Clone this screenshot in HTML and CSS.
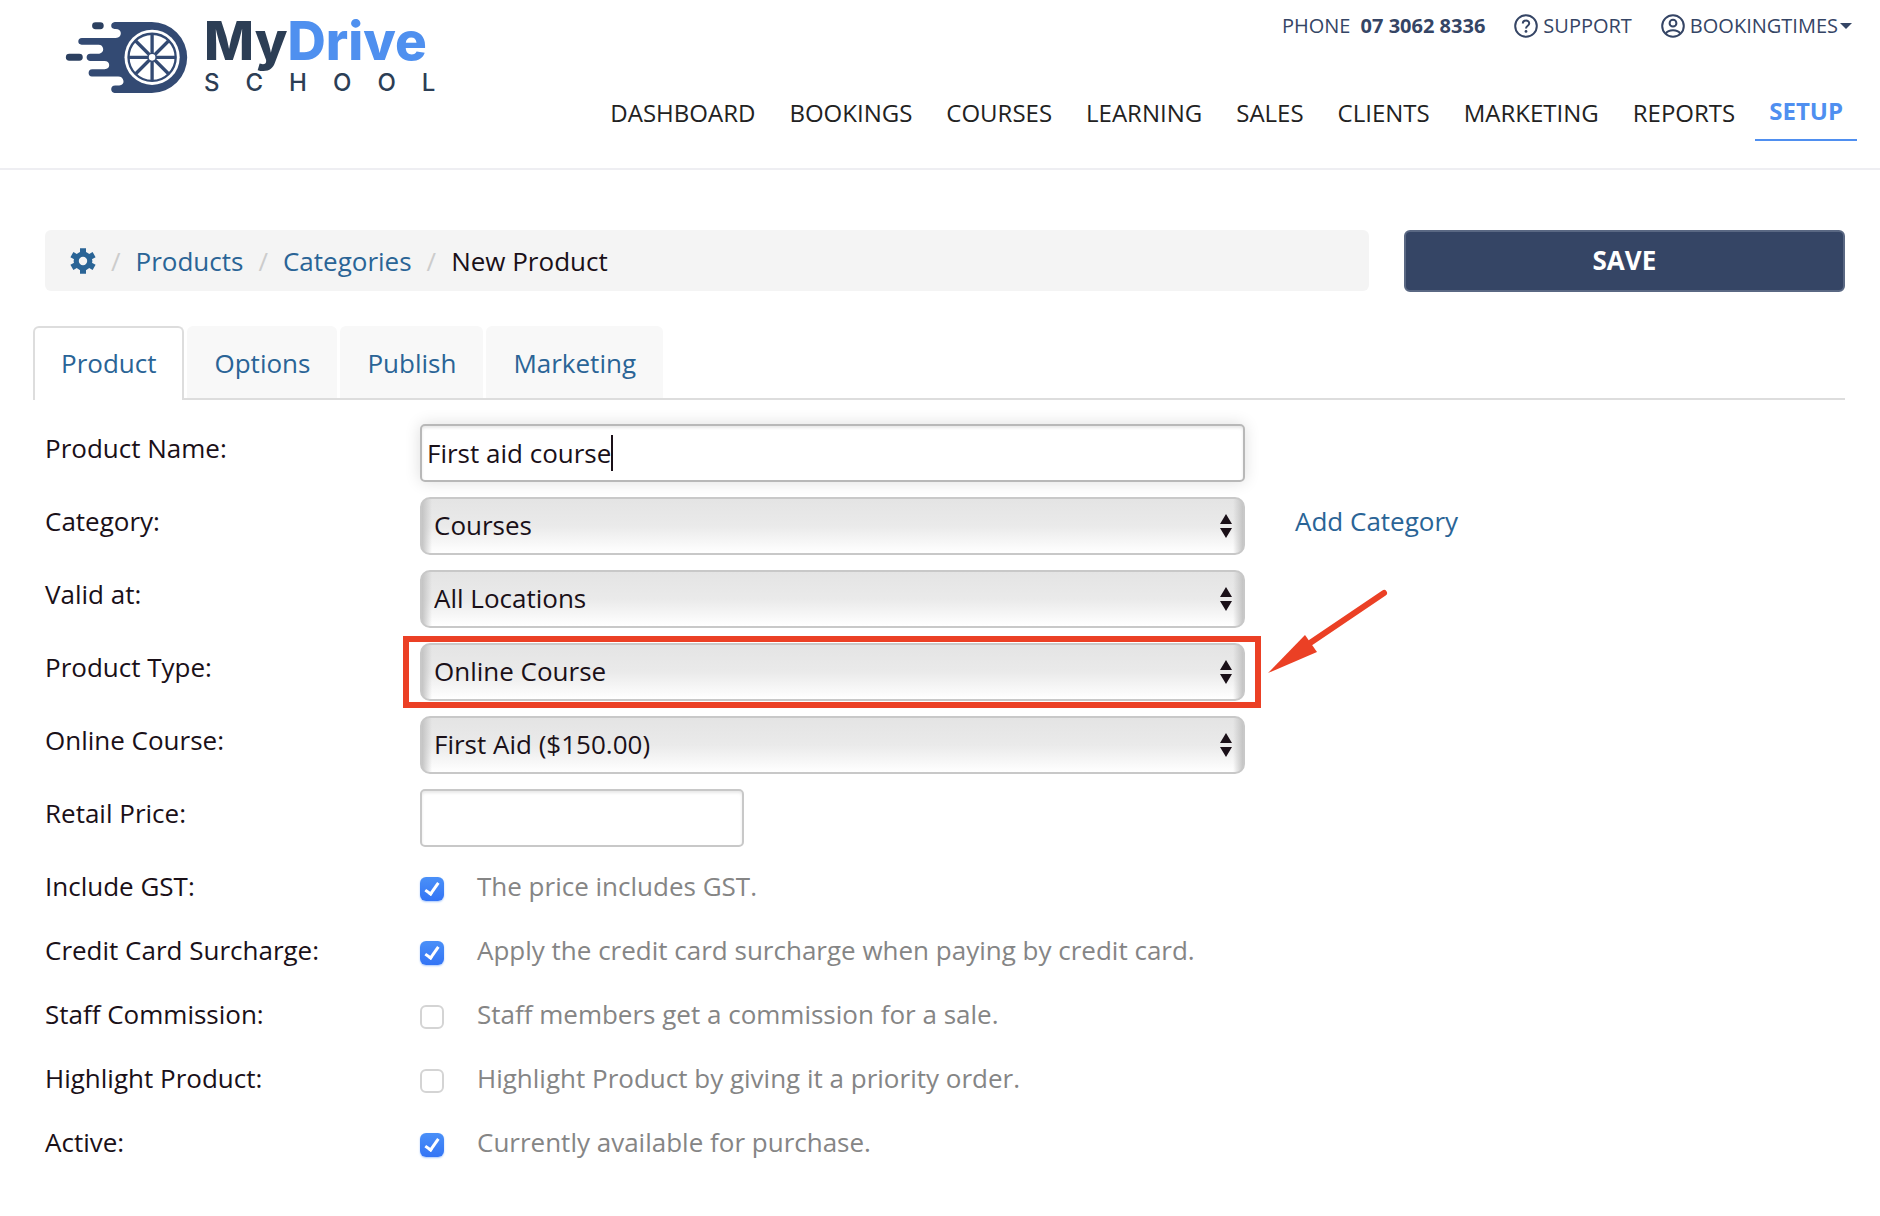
FILE: index.html
```html
<!DOCTYPE html>
<html lang="en">
<head>
<meta charset="utf-8">
<meta name="viewport" content="width=device-width, initial-scale=1">
<title>New Product - MyDrive School</title>
<link rel="stylesheet" href="styles.css">
</head>
<body>
<header class="site-header">
  <a class="logo" href="#" aria-label="MyDrive School">
    <svg class="logo-mark" viewBox="45 58 370 222" aria-hidden="true">
      <path fill="#334a73" d="M195 64H306A106 106 0 0 1 306 277H194Q184 275 184 266Q184 256 196 255H208Q222 252 221 241Q218 228 205 228H126Q116 226 116 217Q116 207 127 206H164Q178 204 178 193Q177 181 164 181H120Q110 179 110 170Q110 160 121 159H148Q160 156 160 145Q158 132 146 132H95Q85 130 85 122Q85 113 96 112H198Q213 110 213 97Q211 85 198 85H194Q184 83 184 75Q184 66 195 64Z"/>
      <path stroke="#2c4060" stroke-width="21" stroke-linecap="round" d="M137 75H151M58 170H88"/>
      <circle cx="307" cy="170" r="83" fill="#fff"/>
      <circle cx="307" cy="170" r="71" fill="none" stroke="#334a73" stroke-width="7"/>
      <path stroke="#334a73" stroke-width="10" d="M307 100V240M237 170H377M257 120L357 220M357 120L257 220"/>
      <circle cx="307" cy="170" r="12" fill="#fff" stroke="#334a73" stroke-width="4"/>
    </svg>
    <span class="logo-text">
      <span class="logo-name">My<span class="logo-accent">Drive</span></span>
      <span class="logo-sub">SCHOOL</span>
    </span>
  </a>
  <div class="header-right">
    <div class="utility">
      <span class="phone">PHONE <strong>07 3062 8336</strong></span>
      <a class="util-link" href="#">
        <svg class="util-icon" viewBox="0 0 24 24" aria-hidden="true"><g fill="none" stroke="currentColor" stroke-width="2"><circle cx="12" cy="12" r="10.8"/><path d="M8.8 9.6C8.8 5.6 15.2 5.6 15.2 9.4C15.2 11.8 12 11.6 12 14.4"/></g><circle cx="12" cy="17.4" r="1.4" fill="currentColor"/></svg>
        SUPPORT
      </a>
      <a class="util-link" href="#">
        <svg class="util-icon" viewBox="0 0 24 24" aria-hidden="true"><g fill="none" stroke="currentColor" stroke-width="2"><circle cx="12" cy="12" r="10.8"/><circle cx="12" cy="9.2" r="3.4"/><path d="M4.8 19.6C7.6 15.2 16.4 15.2 19.2 19.6"/></g></svg>
        BOOKINGTIMES<span class="caret"></span>
      </a>
    </div>
    <nav class="main-nav">
      <a href="#">DASHBOARD</a>
      <a href="#">BOOKINGS</a>
      <a href="#">COURSES</a>
      <a href="#">LEARNING</a>
      <a href="#">SALES</a>
      <a href="#">CLIENTS</a>
      <a href="#">MARKETING</a>
      <a href="#">REPORTS</a>
      <a class="current" href="#">SETUP</a>
    </nav>
  </div>
</header>

<main class="content">
  <div class="title-row">
    <nav class="breadcrumb" aria-label="Breadcrumb">
      <a class="crumb-home" href="#" aria-label="Setup">
        <svg class="gear" viewBox="0 0 26 26" aria-hidden="true">
          <g fill="none" stroke="currentColor">
            <circle cx="13" cy="13" r="6.8" stroke-width="5.2"/>
            <path stroke-width="6" stroke-linejoin="round" d="M13 0.2V6M13 20V25.8M1.9 6.6L7 9.5M19 16.5L24.1 19.4M24.1 6.6L19 9.5M7 16.5L1.9 19.4"/>
          </g>
        </svg>
      </a>
      <span class="slash">/</span>
      <a href="#">Products</a>
      <span class="slash">/</span>
      <a href="#">Categories</a>
      <span class="slash">/</span>
      <span>New Product</span>
    </nav>
    <button class="save" type="submit" form="product-form">SAVE</button>
  </div>

  <nav class="tabs">
    <a class="tab active" href="#">Product</a>
    <a class="tab" href="#">Options</a>
    <a class="tab" href="#">Publish</a>
    <a class="tab" href="#">Marketing</a>
  </nav>

  <form class="form" id="product-form">
    <div class="row">
      <label for="name">Product Name:</label>
      <div class="typed">
        <input class="text-input focused" id="name" type="text" value="First aid course">
        <span class="cursor"></span>
      </div>
    </div>
    <div class="row">
      <label for="category">Category:</label>
      <div class="select">
        <select id="category"><option>Courses</option></select>
        <svg class="arrows" viewBox="0 0 12 24" aria-hidden="true"><path d="M6 0L12 10H0ZM0 14H12L6 24Z"/></svg>
      </div>
      <a class="side-link" href="#">Add Category</a>
    </div>
    <div class="row">
      <label for="valid">Valid at:</label>
      <div class="select">
        <select id="valid"><option>All Locations</option></select>
        <svg class="arrows" viewBox="0 0 12 24" aria-hidden="true"><path d="M6 0L12 10H0ZM0 14H12L6 24Z"/></svg>
      </div>
    </div>
    <div class="row">
      <label for="type">Product Type:</label>
      <div class="select">
        <select id="type"><option>Online Course</option></select>
        <svg class="arrows" viewBox="0 0 12 24" aria-hidden="true"><path d="M6 0L12 10H0ZM0 14H12L6 24Z"/></svg>
        <span class="highlight"></span>
        <svg class="pointer" viewBox="0 0 120 84" aria-hidden="true"><path stroke="#eb4025" stroke-width="6" stroke-linecap="round" d="M116 4L42 54"/><path fill="#eb4025" d="M0 84L37 46L49 63Z"/></svg>
      </div>
    </div>
    <div class="row">
      <label for="course">Online Course:</label>
      <div class="select">
        <select id="course"><option>First Aid ($150.00)</option></select>
        <svg class="arrows" viewBox="0 0 12 24" aria-hidden="true"><path d="M6 0L12 10H0ZM0 14H12L6 24Z"/></svg>
      </div>
    </div>
    <div class="row">
      <label for="price">Retail Price:</label>
      <div><input class="text-input short" id="price" type="text"></div>
    </div>
    <div class="checks">
      <div class="check-row">
        <label for="gst">Include GST:</label>
        <div class="check"><input id="gst" type="checkbox" checked aria-describedby="gst-hint"><span id="gst-hint">The price includes GST.</span></div>
      </div>
      <div class="check-row">
        <label for="surcharge">Credit Card Surcharge:</label>
        <div class="check"><input id="surcharge" type="checkbox" checked aria-describedby="surcharge-hint"><span id="surcharge-hint">Apply the credit card surcharge when paying by credit card.</span></div>
      </div>
      <div class="check-row">
        <label for="commission">Staff Commission:</label>
        <div class="check"><input id="commission" type="checkbox" aria-describedby="commission-hint"><span id="commission-hint">Staff members get a commission for a sale.</span></div>
      </div>
      <div class="check-row">
        <label for="priority">Highlight Product:</label>
        <div class="check"><input id="priority" type="checkbox" aria-describedby="priority-hint"><span id="priority-hint">Highlight Product by giving it a priority order.</span></div>
      </div>
      <div class="check-row">
        <label for="active">Active:</label>
        <div class="check"><input id="active" type="checkbox" checked aria-describedby="active-hint"><span id="active-hint">Currently available for purchase.</span></div>
      </div>
    </div>
  </form>
</main>
</body>
</html>
```
FILE: styles.css
```css
* { box-sizing: border-box; }

body {
  margin: 0;
  background: #fff;
  color: #1a1018;
  font: 26px/36px "Open Sans", sans-serif;
}

a { color: #2a6496; text-decoration: none; }

/* Header */
.site-header {
  display: flex;
  justify-content: space-between;
  height: 170px;
  padding: 0 23px 0 65px;
  border-bottom: 2px solid #eeeef2;
}

.logo { display: flex; gap: 16px; padding-top: 20px; }
.logo-mark { width: 123px; height: 74px; }
.logo-text { display: flex; flex-direction: column; font-family: Inter, sans-serif; color: #2c3e55; }
.logo-name { font-size: 53px; font-weight: 800; line-height: 42px; }
.logo-accent { color: #4f90ef; }
.logo-sub { font-size: 24px; font-weight: 500; line-height: 42px; letter-spacing: 26px; }

.header-right { display: flex; flex-direction: column; align-items: flex-end; }

.utility {
  display: flex;
  align-items: center;
  gap: 29px;
  height: 52px;
  padding-right: 5px;
  font-size: 20px;
  color: #354565;
}
.phone strong { margin-left: 5px; }
.util-link { display: flex; align-items: center; gap: 5px; color: #354565; }
.util-icon { width: 24px; height: 24px; }
.caret { border: 6px solid transparent; border-top-color: currentColor; border-bottom: 0; margin-left: -3px; }

.main-nav { display: flex; padding-top: 36px; font-size: 24px; }
.main-nav a { padding: 7px 17px 0; color: #222; }
.main-nav .current {
  height: 53px;
  margin-left: 3px;
  padding: 5px 14px 0;
  border-bottom: 2px solid #4f8ff0;
  color: #4f8ff0;
  font-weight: 700;
}

/* Title bar */
.content { padding: 60px 35px 40px 45px; }
.title-row { display: grid; grid-template-columns: 3fr 1fr; align-items: start; gap: 35px; }
.breadcrumb {
  display: flex;
  align-items: center;
  gap: 15px;
  height: 61px;
  padding: 0 25px;
  border-radius: 6px;
  background: #f4f4f4;
}
.crumb-home { display: flex; }
.gear { width: 26px; height: 26px; }
.slash { color: #ccc; }
.save {
  height: 62px;
  padding-bottom: 3px;
  border: 2px solid #5a6883;
  border-radius: 6px;
  background: #354565;
  color: #fff;
  font: 700 26px/36px "Open Sans", sans-serif;
}

/* Tabs */
.tabs {
  display: flex;
  gap: 3px;
  margin: 34px 0 0 -12px;
  border-bottom: 2px solid #ddd;
}
.tab {
  height: 72px;
  padding: 19px 27px 0;
  border-radius: 6px 6px 0 0;
  background: #f8f8f8;
}
.tab.active {
  height: 74px;
  margin-bottom: -2px;
  padding: 17px 26px 0;
  border: 2px solid #ddd;
  border-bottom: 0;
  background: #fff;
}

/* Form */
.form { padding-top: 24px; }
.row, .check-row { display: grid; grid-template-columns: 5fr 11fr 8fr; }
.row { margin-bottom: 15px; }
.row label { padding-top: 6px; }

.typed, .select { position: relative; }
.text-input, select {
  display: block;
  width: 100%;
  height: 58px;
  border: 2px solid #c8c8c8;
  color: #1a1018;
  font: 26px/36px "Open Sans", sans-serif;
}
.text-input {
  padding: 0 5px;
  border-radius: 5px;
  background: #fff;
  box-shadow: inset 0 2px 3px #e8e8e8;
}
.text-input.focused {
  border-color: #b8b8b8;
  box-shadow: inset 0 2px 3px #e8e8e8, 0 0 16px #ddd;
}
.text-input.short { width: 324px; }
.cursor { position: absolute; left: 191px; top: 11px; width: 2px; height: 36px; background: #1a1018; }

select {
  appearance: none;
  padding: 0 12px 2px;
  border-radius: 10px;
  background:
    linear-gradient(to right, #c4c4c4, rgba(196, 196, 196, 0) 10px, rgba(196, 196, 196, 0) calc(100% - 10px), #c4c4c4),
    linear-gradient(#e4e4e4, #eaeaea 50%, #fff);
}
.arrows { position: absolute; right: 13px; top: 17px; width: 12px; height: 24px; fill: #1a1018; }
.side-link { padding: 6px 0 0 50px; }

/* Callout around the product type */
.highlight { position: absolute; inset: -7px -16px -7px -17px; border: 6px solid #eb4025; pointer-events: none; }
.pointer { position: absolute; left: calc(100% + 23px); top: -54px; width: 120px; height: 84px; }

.checks { display: grid; gap: 28px; padding-top: 6px; }
.check { display: flex; align-items: center; gap: 33px; color: #858585; white-space: nowrap; }
.check input {
  appearance: none;
  position: relative;
  width: 24px;
  height: 24px;
  margin: 6px 0 0;
  border: 2px solid #d4d4d4;
  border-radius: 6px;
  background: #fff;
}
.check input:checked { border: 0; background: linear-gradient(#4a90f8, #3374f5); box-shadow: 0 1px 2px #a9c8fb; }
.check input:checked::after {
  content: "";
  position: absolute;
  left: 8px;
  top: 3px;
  width: 5px;
  height: 12px;
  border: solid #fff;
  border-width: 0 3px 3px 0;
  transform: rotate(35deg);
}
```
